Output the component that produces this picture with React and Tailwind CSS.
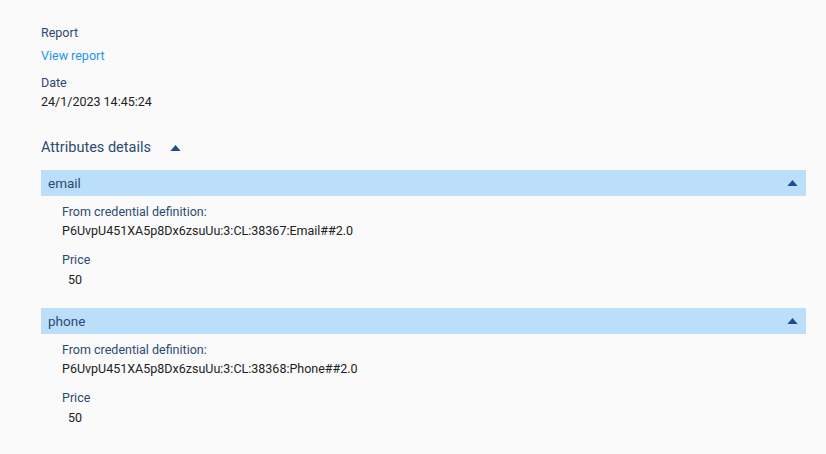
import React from "react";

const Caret = ({ className = "" }) => (
  <svg width="12" height="7" viewBox="0 0 12 7" className={className}>
    <path d="M0 7 L6 0 L12 7 Z" fill="#1f4e8c" />
  </svg>
);

const Attribute = ({ name, credDef, price }) => (
  <div className="mb-[18px]">
    <div className="h-[26px] bg-[#bbdefb] flex items-center justify-between pl-[7px] pr-[8px] text-[13.5px] text-[#2c4a72]">
      <span>{name}</span>
      <Caret className="w-[11px] h-[6px]" />
    </div>
    <div className="pl-[21px] pt-[6px] text-[12.5px]">
      <div className="text-[#2c4a72] leading-[19px]">From credential definition:</div>
      <div className="text-[#222] leading-[20px]">{credDef}</div>
      <div className="text-[#2c4a72] leading-[19px] mt-[9px]">Price</div>
      <div className="text-[#222] leading-[21px] pl-[6px]">{price}</div>
    </div>
  </div>
);

export default function App() {
  return (
    <div className="min-h-[454px] bg-[#fafafa] pt-[23px] pl-[41px] pr-[20px] font-['Roboto',sans-serif]">
      <div className="text-[12.5px]">
        <div className="text-[#2c4a72] leading-[19px]">Report</div>
        <div className="text-[#2196f3] leading-[19px] mt-[4px]">View report</div>
        <div className="text-[#2c4a72] leading-[19px] mt-[8px]">Date</div>
        <div className="text-[#222] leading-[20px]">24/1/2023 14:45:24</div>
      </div>
      <div className="flex items-center mt-[25px] h-[22px] text-[14.5px] text-[#2c4a72]">
        <span>Attributes details</span>
        <Caret className="ml-[19px] w-[11px] h-[6px]" />
      </div>
      <div className="mt-[11px]">
        <Attribute
          name="email"
          credDef="P6UvpU451XA5p8Dx6zsuUu:3:CL:38367:Email##2.0"
          price="50"
        />
        <Attribute
          name="phone"
          credDef="P6UvpU451XA5p8Dx6zsuUu:3:CL:38368:Phone##2.0"
          price="50"
        />
      </div>
    </div>
  );
}
